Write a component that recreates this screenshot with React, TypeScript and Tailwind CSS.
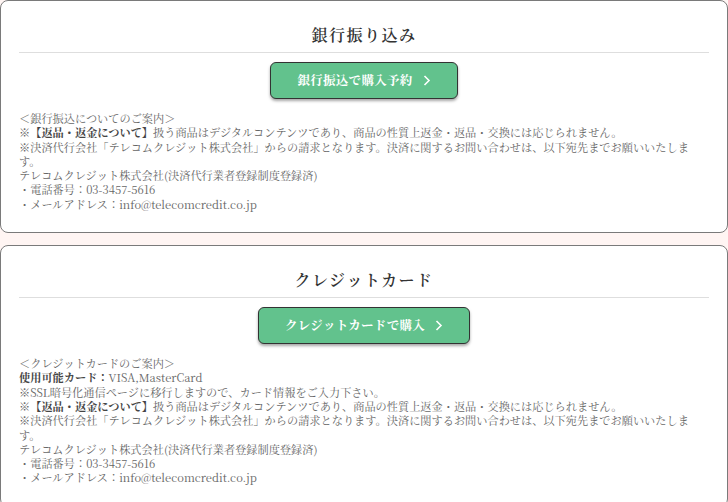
const serif = {
  fontFamily:
    '"Noto Serif CJK JP", "Liberation Serif", "Noto Sans CJK JP", serif',
};

function Chevron() {
  return (
    <svg width="8" height="11" viewBox="0 0 8 11" fill="none" className="ml-[10px]">
      <path d="M1.5 1 L6 5.5 L1.5 10" stroke="white" strokeWidth="1.6" />
    </svg>
  );
}

interface PayCardProps {
  title: string;
  button: string;
  children: React.ReactNode;
}

function PayCard({ title, button, children }: PayCardProps) {
  return (
    <section className="bg-white border border-[#7a7a7a] rounded-lg pt-[22px] pb-[21px] pl-[18px] pr-[28px]">
      <h2 className="ml-[10px] text-center text-[16px] leading-[24px] font-semibold tracking-[1.5px] text-[#333]">
        {title}
      </h2>
      <div className="mt-[5px] -mr-[10px] h-px bg-[#dedede]" />
      <div className="ml-[10px] flex justify-center mt-[9px]">
        <button className="flex items-center h-[37px] px-[26px] rounded-[6px] border border-[#333] bg-[#62c28d] text-white text-[12.5px] font-bold tracking-[0.3px] shadow-[0_2px_3px_rgba(0,0,0,0.35)]">
          {button}
          <Chevron />
        </button>
      </div>
      <div className="mt-[12px] text-[11.2px] leading-[14.3px] text-[#666]">{children}</div>
    </section>
  );
}

function Contact() {
  return (
    <>
      <p>
        ※決済代行会社「テレコムクレジット株式会社」からの請求となります。決済に関するお問い合わせは、以下宛先までお願いいたします。
      </p>
      <p>テレコムクレジット株式会社(決済代行業者登録制度登録済)</p>
      <p>・電話番号：03-3457-5616</p>
      <p>・メールアドレス：info@telecomcredit.co.jp</p>
    </>
  );
}

function Refund() {
  return (
    <p>
      ※<b className="text-[#444]">【返品・返金について】</b>
      扱う商品はデジタルコンテンツであり、商品の性質上返金・返品・交換には応じられません。
    </p>
  );
}

export default function App() {
  return (
    <div className="min-h-screen bg-[#fff5f3] pb-4" style={serif}>
      <div className="flex flex-col gap-[12px]">
        <PayCard title="銀行振り込み" button="銀行振込で購入予約">
          <p>＜銀行振込についてのご案内＞</p>
          <Refund />
          <Contact />
        </PayCard>
        <PayCard title="クレジットカード" button="クレジットカードで購入">
          <p>＜クレジットカードのご案内＞</p>
          <p>
            <b className="text-[#444]">使用可能カード：</b>VISA,MasterCard
          </p>
          <p>※SSL暗号化通信ページに移行しますので、カード情報をご入力下さい。</p>
          <Refund />
          <Contact />
        </PayCard>
      </div>
    </div>
  );
}
